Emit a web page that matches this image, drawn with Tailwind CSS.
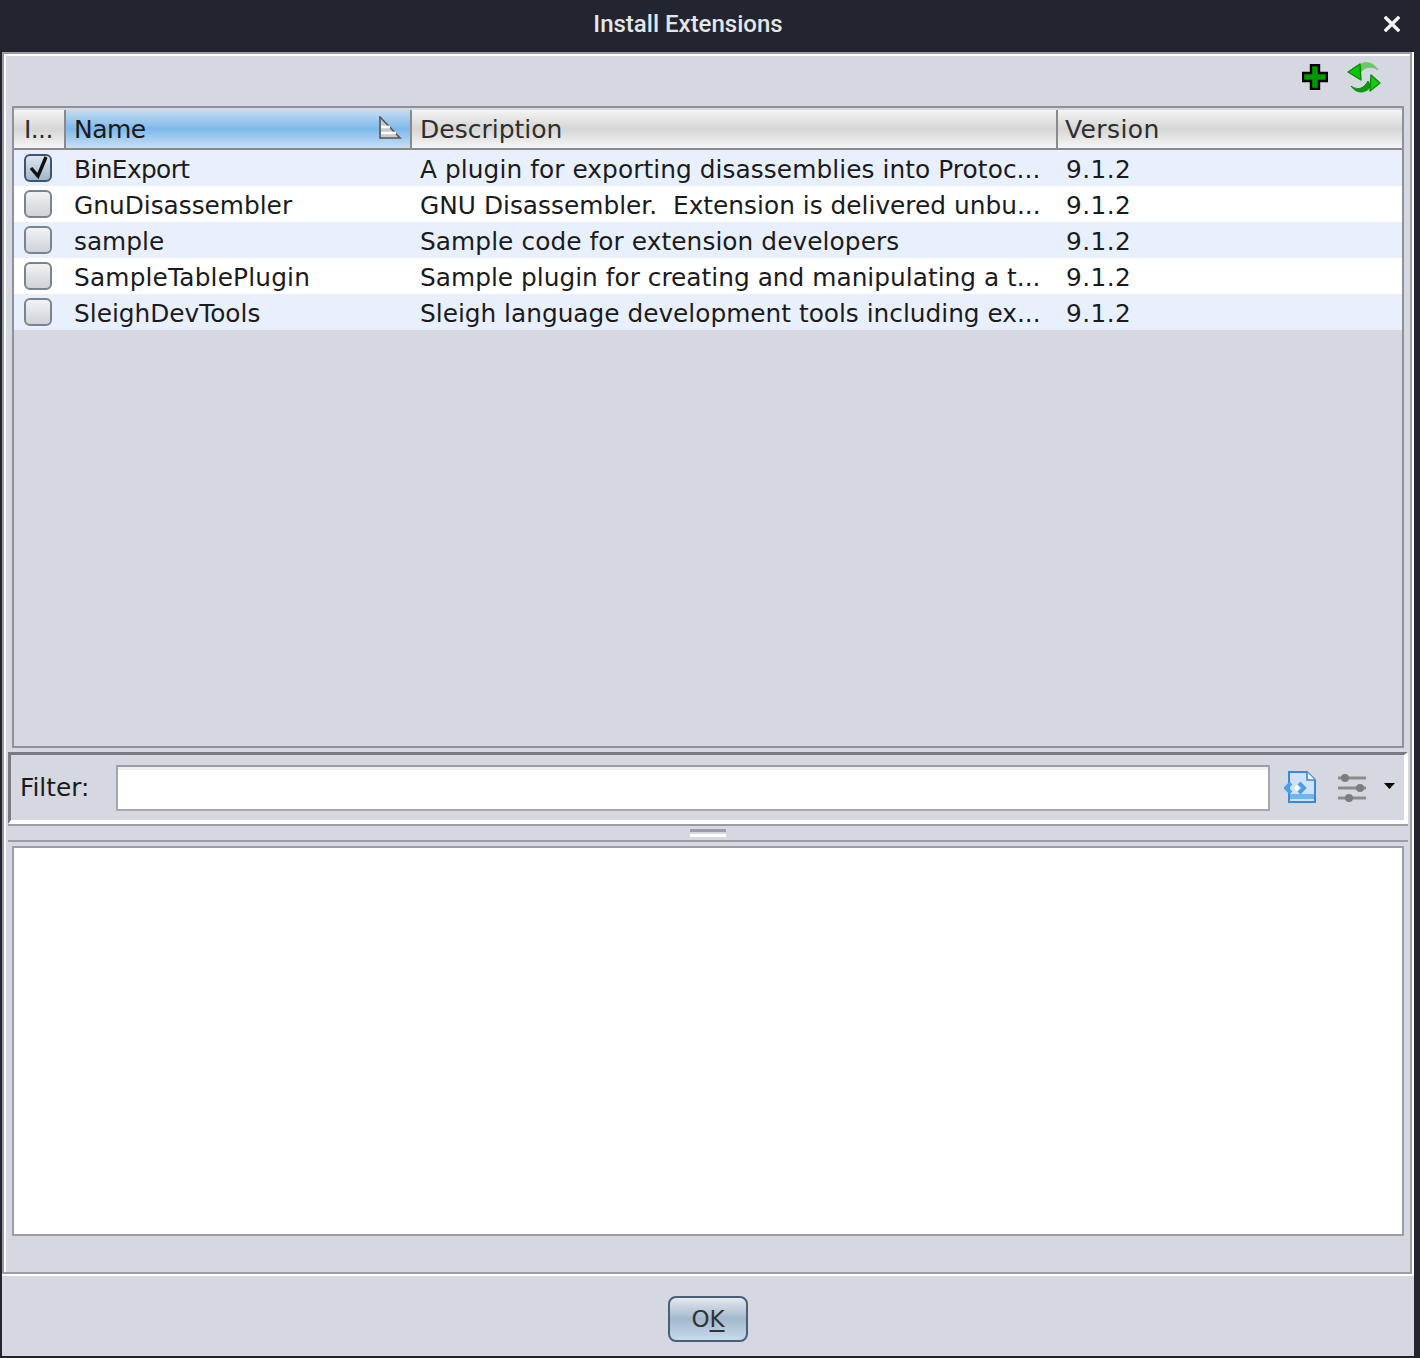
<!DOCTYPE html>
<html>
<head>
<meta charset="utf-8">
<script src="https://cdn.jsdelivr.net/npm/@tailwindcss/browser@4"></script>
<title>Install Extensions</title>
</head>
<body class="bg-[#22252f]">
<div class="w-[1420px] h-[1358px] flex flex-col bg-[#22252f] font-['DejaVu_Sans',sans-serif] text-[#1b1b1b] overflow-hidden">

  <!-- barra de titulo -->
  <div class="h-[52px] shrink-0 relative flex items-center justify-center pr-[44px]">
    <span class="-mt-[5px] font-['Roboto',sans-serif] font-medium text-[24px] text-[#e4e6ea]">Install Extensions</span>
    <svg class="absolute left-[1384px] top-[16px]" width="16" height="16" viewBox="0 0 16 16"><path d="M2 2 L14 14 M14 2 L2 14" stroke="#f2f2f2" stroke-width="3.4" stroke-linecap="square"/></svg>
  </div>

  <div class="flex-1 ml-[2px] mr-[6px] mb-[2px] bg-[#d5d8e0] flex flex-col">

    <!-- painel principal -->
    <div class="h-[1222px] shrink-0 border-r-[2px] border-white">
      <div class="h-full border-[2px] border-[#9a9da6]">
        <div class="h-full flex flex-col border-t-[2px] border-l-[2px] border-white">

          <!-- toolbar -->
          <div class="h-[50px] shrink-0 relative">
            <svg class="absolute left-[1296px] top-[8px]" width="26" height="26" viewBox="0 0 26 26"><path d="M9 1h8v8h8v8h-8v8H9v-8H1V9h8z" fill="#009a00" stroke="#000" stroke-width="2.4"/></svg>
            <svg class="absolute left-[1340px] top-[4px]" width="36" height="36" viewBox="0 0 36 36">
              <path d="M11 8C15 1 26 0 32 10C26 6 19 6 14 13Z" fill="#5fcf5f" stroke="#7fb87f" stroke-width="0.8"/>
              <path d="M2 12L14 4L15 20Z" fill="#0cc40c" stroke="#0a8a0a" stroke-width="1.4" stroke-linejoin="round"/>
              <path d="M25 26C21 33 11 35 5 26C11 30 17 30 22 21Z" fill="#0a9a0a" stroke="#0a7d0a" stroke-width="0.8"/>
              <path d="M34 23L25 15L24 31Z" fill="#14cc14" stroke="#0a8a0a" stroke-width="1.4" stroke-linejoin="round"/>
            </svg>
          </div>

          <!-- tabela -->
          <div class="ml-[6px] mr-[6px] h-[642px] shrink-0 border-[2px] border-[#8e9199] flex flex-col">
            <div class="h-[42px] shrink-0 border-b-[2px] border-[#8a8a8a] pt-[2px] grid grid-cols-[52px_346px_646px_1fr] text-[#2e2e2e] text-[25px] leading-[40px]">
              <div class="h-[38px] bg-gradient-to-b from-[#f4f4f4] via-[#d6d6d6] to-[#f6f6f6] border-r-[2px] border-[#8a8a8a] pl-[10px] tracking-[-0.6px]">I...</div>
              <div class="h-[38px] bg-gradient-to-b from-[#c5ddf2] via-[#7db8ea] to-[#c8e0f5] border-r-[2px] border-[#8a8a8a] pl-[8px] relative text-[#1b1b1b] tracking-[-0.5px]">Name
                <svg class="absolute right-[8px] top-[6px]" width="24" height="24" viewBox="0 0 24 24"><path d="M2 1 L22 22 H2 Z" fill="#c9c9c9" stroke="#555" stroke-width="1.6"/><path d="M3 11h9M3 17h15" stroke="#fff" stroke-width="2.5"/></svg>
              </div>
              <div class="h-[38px] bg-gradient-to-b from-[#f4f4f4] via-[#d6d6d6] to-[#f6f6f6] border-r-[2px] border-[#8a8a8a] pl-[8px]">Description</div>
              <div class="h-[38px] bg-gradient-to-b from-[#f4f4f4] via-[#d6d6d6] to-[#f6f6f6] pl-[7px] tracking-[0.4px]">Version</div>
            </div>

            <div class="h-[36px] grid grid-cols-[52px_346px_646px_1fr] text-[24.8px] leading-[40px] bg-[#e9f0fd]">
              <div class="pl-[10px] pt-[4px]"><div class="w-[28px] h-[28px] rounded-[6px] border-[2px] border-[#3f556e] bg-gradient-to-b from-[#dfe6ee] to-[#9fb6cc]"><svg width="24" height="24" viewBox="0 0 24 24"><path d="M5 12l7 8 8-19" fill="none" stroke="#111" stroke-width="3.4"/></svg></div></div>
              <div class="pl-[8px] whitespace-nowrap tracking-[-0.6px]">BinExport</div>
              <div class="pl-[8px] whitespace-nowrap overflow-hidden tracking-[0.08px]">A plugin for exporting disassemblies into Protoc...</div>
              <div class="pl-[8px] tracking-[0.4px]">9.1.2</div>
            </div>
            <div class="h-[36px] grid grid-cols-[52px_346px_646px_1fr] text-[24.8px] leading-[40px] bg-white">
              <div class="pl-[10px] pt-[4px]"><div class="w-[28px] h-[28px] rounded-[6px] border-[2px] border-[#7a838e] bg-gradient-to-b from-[#f2f3f5] to-[#cfd2d8]"></div></div>
              <div class="pl-[8px] whitespace-nowrap">GnuDisassembler</div>
              <div class="pl-[8px] whitespace-pre overflow-hidden tracking-[0.02px]">GNU Disassembler.  Extension is delivered unbu...</div>
              <div class="pl-[8px] tracking-[0.4px]">9.1.2</div>
            </div>
            <div class="h-[36px] grid grid-cols-[52px_346px_646px_1fr] text-[24.8px] leading-[40px] bg-[#e9f0fd]">
              <div class="pl-[10px] pt-[4px]"><div class="w-[28px] h-[28px] rounded-[6px] border-[2px] border-[#7a838e] bg-gradient-to-b from-[#f2f3f5] to-[#cfd2d8]"></div></div>
              <div class="pl-[8px] whitespace-nowrap">sample</div>
              <div class="pl-[8px] whitespace-nowrap overflow-hidden tracking-[0.08px]">Sample code for extension developers</div>
              <div class="pl-[8px] tracking-[0.4px]">9.1.2</div>
            </div>
            <div class="h-[36px] grid grid-cols-[52px_346px_646px_1fr] text-[24.8px] leading-[40px] bg-white">
              <div class="pl-[10px] pt-[4px]"><div class="w-[28px] h-[28px] rounded-[6px] border-[2px] border-[#7a838e] bg-gradient-to-b from-[#f2f3f5] to-[#cfd2d8]"></div></div>
              <div class="pl-[8px] whitespace-nowrap tracking-[0.18px]">SampleTablePlugin</div>
              <div class="pl-[8px] whitespace-nowrap overflow-hidden tracking-[0.02px]">Sample plugin for creating and manipulating a t...</div>
              <div class="pl-[8px] tracking-[0.4px]">9.1.2</div>
            </div>
            <div class="h-[36px] grid grid-cols-[52px_346px_646px_1fr] text-[24.8px] leading-[40px] bg-[#e9f0fd]">
              <div class="pl-[10px] pt-[4px]"><div class="w-[28px] h-[28px] rounded-[6px] border-[2px] border-[#7a838e] bg-gradient-to-b from-[#f2f3f5] to-[#cfd2d8]"></div></div>
              <div class="pl-[8px] whitespace-nowrap">SleighDevTools</div>
              <div class="pl-[8px] whitespace-nowrap overflow-hidden">Sleigh language development tools including ex...</div>
              <div class="pl-[8px] tracking-[0.4px]">9.1.2</div>
            </div>
          </div>

          <!-- filtro -->
          <div class="mt-[4px] ml-[2px] mr-[2px] h-[72px] shrink-0 border-t-[3px] border-l-[3px] border-[#777a82] border-b-[4px] border-b-white border-r-[4px] border-r-white flex items-center">
            <span class="ml-[9px] w-[96px] shrink-0 text-[24.8px] text-[#1b1b1b]">Filter:</span>
            <div class="w-[1154px] shrink-0 h-[46px] mt-[1px] border-[2px] border-[#a5a7ad] bg-white border-t-[#9a9da6] shadow-[inset_0_3px_0_#eeeef0]"></div>
            <svg class="ml-[14px] shrink-0" width="34" height="34" viewBox="0 0 34 34">
              <path d="M5 1h18l8 8v22H5z" fill="#cfe2f8" stroke="#3f86d8" stroke-width="2"/>
              <path d="M23 1v8h8" fill="#eef5fd" stroke="#3f86d8" stroke-width="1.600"/>
              <rect x="6" y="23" width="24" height="5" fill="#6fb6f0"/>
              <path d="M10 17l3-3 3 3-3 3z" fill="#ffffff"/>
              <path d="M7 12l-5 5 5 5M15 12l5 5-5 5" fill="none" stroke="#4f9fe8" stroke-width="4"/>
            </svg>
            <svg class="ml-[19px] shrink-0" width="30" height="30" viewBox="0 0 30 30">
              <path d="M1 5h28M1 15h28M1 25h28" stroke="#8b8b8b" stroke-width="3"/>
              <circle cx="8" cy="5" r="4" fill="#7d7d7d"/><circle cx="23" cy="15" r="4" fill="#7d7d7d"/><circle cx="12" cy="25" r="4" fill="#7d7d7d"/>
            </svg>
            <svg class="ml-[17px] -mt-[3px] shrink-0" width="12" height="8" viewBox="0 0 12 8"><path d="M0 1h11L5.500 7z" fill="#000"/></svg>
          </div>

          <!-- divisor -->
          <div class="ml-[2px] mr-[2px] h-[18px] shrink-0 border-t-[2px] border-[#9a9da6] border-b-[2px] relative">
            <div class="absolute left-[682px] top-[3px] w-[36px] h-[8px] border-t-[3px] border-[#9a9da6] border-b-[3px] border-b-white"></div>
          </div>

          <!-- detalhes -->
          <div class="mt-[4px] ml-[6px] mr-[6px] h-[390px] shrink-0 border-[2px] border-[#9a9da6] bg-white"></div>
        </div>
      </div>
    </div>
    <div class="h-[2px] shrink-0 bg-white"></div>

    <!-- rodape -->
    <div class="flex-1 flex justify-center pt-[20px]">
      <button class="w-[80px] h-[46px] rounded-[8px] border-[2px] border-[#4b6076] bg-gradient-to-b from-[#e4e9f0] via-[#a3b8cc] to-[#c6dced] text-[23px] leading-[42px] text-[#333]">O<span class="underline underline-offset-[3px]">K</span></button>
    </div>
  </div>
</div>
</body>
</html>
